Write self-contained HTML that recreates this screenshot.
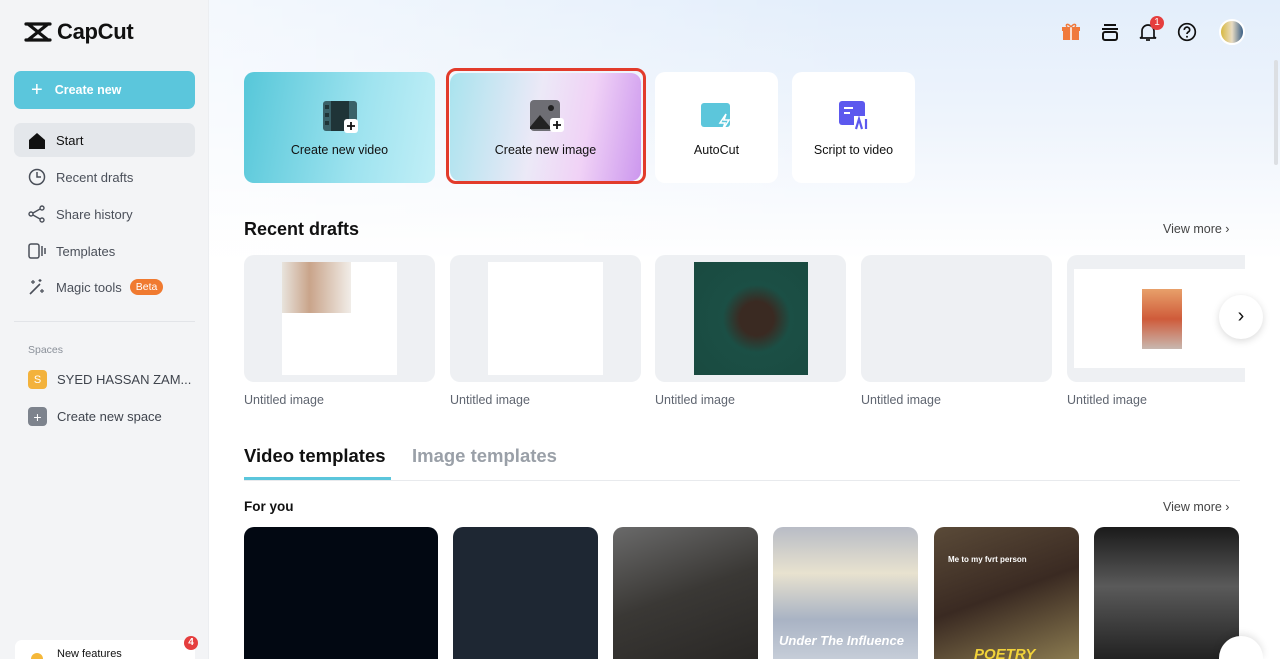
<!DOCTYPE html>
<html style="width:1280px;height:659px;overflow:hidden"><head><meta charset="utf-8"><style>
*{margin:0;padding:0;box-sizing:border-box}
body{width:1280px;height:659px;overflow:hidden;font-family:"Liberation Sans",sans-serif;position:relative;background:#fff}
.sb{position:absolute;left:0;top:0;width:209px;height:659px;background:#f3f4f6;border-right:1px solid #eceef1}
.main{position:absolute;left:209px;top:0;right:0;height:659px;background:linear-gradient(180deg,#e3eefb 0,#eef4fc 120px,#fff 260px)}
.main:before{content:"";position:absolute;inset:0;background:linear-gradient(90deg,rgba(255,255,255,.6),rgba(255,255,255,0) 60%)}
.a{position:absolute}
.nav{position:absolute;left:28px;font-size:13px;color:#4a4f59;display:flex;align-items:center;gap:10px}
.card{position:absolute;top:72px;height:111px;border-radius:10px;background:#fff;font-size:12.5px;color:#111;text-align:center}
.card .t{position:absolute;left:0;right:0;top:71px}
.dr{position:absolute;top:255px;height:127px;width:191px;border-radius:10px;background:#eef0f3}
.lbl{position:absolute;top:393px;font-size:12.5px;color:#5f6570}
.tp{position:absolute;top:527px;height:132px;border-radius:10px 10px 0 0}
</style></head><body>
<div class="sb">
 <div class="a" style="left:24px;top:19px;display:flex;align-items:center;gap:5px">
  <svg width="28" height="24" viewBox="0 0 28 24"><path d="M2 4h24M2 20h24M4 4l20 16M24 4L4 20" stroke="#111" stroke-width="3.2" fill="none" stroke-linecap="round"/></svg>
  <span style="font-size:22px;font-weight:bold;color:#111;letter-spacing:-.3px">CapCut</span>
 </div>
 <div class="a" style="left:14px;top:71px;width:181px;height:38px;border-radius:7px;background:#5bc6dc;color:#fff;font-size:12.5px;font-weight:bold;display:flex;align-items:center;padding-left:17px;gap:12px"><span style="font-size:20px;font-weight:normal">+</span>Create new</div>
 <div class="a" style="left:14px;top:123px;width:181px;height:34px;border-radius:7px;background:#e4e7eb"></div>
 <div class="nav" style="top:132px;color:#111"><svg width="18" height="17"><path d="M1 8L9 1l8 7v9H1z" fill="#111"/></svg>Start</div>
 <div class="nav" style="top:168px"><svg width="18" height="18"><circle cx="9" cy="9" r="7.5" stroke="#4a4f59" stroke-width="1.5" fill="none"/><path d="M9 4v5h4" stroke="#4a4f59" stroke-width="1.5" fill="none"/></svg>Recent drafts</div>
 <div class="nav" style="top:205px"><svg width="18" height="18"><circle cx="14" cy="3" r="2" fill="none" stroke="#4a4f59" stroke-width="1.4"/><circle cx="3" cy="9" r="2" fill="none" stroke="#4a4f59" stroke-width="1.4"/><circle cx="14" cy="15" r="2" fill="none" stroke="#4a4f59" stroke-width="1.4"/><path d="M5 8l7-4M5 10l7 4" stroke="#4a4f59" stroke-width="1.4"/></svg>Share history</div>
 <div class="nav" style="top:242px"><svg width="18" height="18"><rect x="1" y="2" width="10" height="14" rx="2" fill="none" stroke="#4a4f59" stroke-width="1.5"/><path d="M14 4v10M17 6v6" stroke="#4a4f59" stroke-width="1.5"/></svg>Templates</div>
 <div class="nav" style="top:278px"><svg width="18" height="18"><path d="M2 16L12 6" stroke="#4a4f59" stroke-width="1.6"/><path d="M5 2v4M3 4h4M14 11v4M12 13h4M12 1v3M10.5 2.5h3" stroke="#4a4f59" stroke-width="1.2"/></svg>Magic tools<span style="background:#f07a30;color:#fff;font-size:10.5px;border-radius:8px;padding:2px 6px;margin-left:-2px">Beta</span></div>
 <div class="a" style="left:14px;top:321px;width:181px;height:1px;background:#e2e4e8"></div>
 <div class="a" style="left:28px;top:344px;font-size:10.5px;color:#8a9099">Spaces</div>
 <div class="nav" style="top:370px;color:#3f444d"><span style="width:19px;height:19px;border-radius:4px;background:#f3b23c;color:#fff;font-size:11px;display:inline-flex;align-items:center;justify-content:center">S</span>SYED HASSAN ZAM...</div>
 <div class="nav" style="top:407px;color:#3f444d"><span style="width:19px;height:19px;border-radius:4px;background:#7d838d;color:#fff;font-size:14px;display:inline-flex;align-items:center;justify-content:center">+</span>Create new space</div>
 <div class="a" style="left:15px;top:640px;width:180px;height:19px;border-radius:7px 7px 0 0;background:#fff;font-size:11px;color:#111;padding:9px 0 0 42px;overflow:hidden;line-height:11px">New features</div>
 <div class="a" style="left:31px;top:653px;width:12px;height:6px;background:#f5b83a;border-radius:6px 6px 0 0"></div>
 <div class="a" style="left:184px;top:636px;width:14px;height:14px;border-radius:50%;background:#e53e3e;color:#fff;font-size:10px;font-weight:bold;text-align:center;line-height:14px">4</div>
</div>
<div class="main"></div>
<svg class="a" style="left:1061px;top:22px" width="20" height="20"><rect x="2" y="7" width="16" height="11" fill="#f07a3c"/><rect x="1" y="5" width="18" height="4" fill="#f07a3c"/><path d="M10 5v13" stroke="#fff" stroke-width="1.5"/><path d="M10 5C7 1 4 2 6 5M10 5c3-4 6-3 4 0" stroke="#f07a3c" stroke-width="1.5" fill="none"/></svg>
<svg class="a" style="left:1100px;top:22px" width="20" height="20"><path d="M4 3h12M2 7h16" stroke="#111" stroke-width="2"/><rect x="3" y="10" width="14" height="8" rx="2" fill="none" stroke="#111" stroke-width="2"/></svg>
<svg class="a" style="left:1138px;top:22px" width="20" height="20"><path d="M4 15V9a6 6 0 0112 0v6l2 1H2z" fill="none" stroke="#111" stroke-width="1.7"/><path d="M8 18h4" stroke="#111" stroke-width="1.7"/></svg>
<div class="a" style="left:1150px;top:16px;width:14px;height:14px;border-radius:50%;background:#e53e3e;color:#fff;font-size:10px;text-align:center;line-height:14px">1</div>
<svg class="a" style="left:1177px;top:22px" width="20" height="20"><circle cx="10" cy="10" r="8.3" fill="none" stroke="#111" stroke-width="1.7"/><path d="M7.3 8a2.7 2.7 0 115 1.2c-.8.8-2.3 1.2-2.3 2.8" fill="none" stroke="#111" stroke-width="1.7"/><circle cx="10" cy="14.8" r="1" fill="#111"/></svg>
<div class="a" style="left:1219px;top:19px;width:26px;height:26px;border-radius:50%;background:linear-gradient(90deg,#d8b940,#e9dcc3 50%,#3a5f86);border:2px solid #fff"></div>
<div class="a" style="left:1274px;top:60px;width:4px;height:105px;background:#dcdfe3;border-radius:2px"></div>
<div class="card" style="left:244px;width:191px;background:linear-gradient(100deg,#56c7d9,#9ee3ef 60%,#c2eff7)"><svg class="a" style="left:78px;top:28px" width="38" height="34"><rect x="1" y="1" width="34" height="30" rx="3" fill="#3a6168"/><rect x="9" y="1" width="18" height="30" fill="#1f3437"/><rect x="3" y="5" width="4" height="4" fill="#1f3437"/><rect x="3" y="13" width="4" height="4" fill="#1f3437"/><rect x="3" y="21" width="4" height="4" fill="#1f3437"/><rect x="22" y="19" width="14" height="14" rx="3" fill="#fff"/><path d="M29 22v8M25 26h8" stroke="#111" stroke-width="1.8"/></svg><div class="t">Create new video</div></div>
<div class="a" style="left:446px;top:68px;width:200px;height:116px;border:3px solid #e23b2b;border-radius:10px"></div>
<div class="card" style="left:450px;width:191px;top:73px;height:108px;background:linear-gradient(100deg,#a9e3ee,#ece9f7 45%,#f0d2f6 70%,#cc97ee)"><svg class="a" style="left:79px;top:26px" width="36" height="34"><rect x="1" y="1" width="30" height="31" rx="4" fill="#6e6e74"/><path d="M1 28l10-12 12 14H1z" fill="#222"/><circle cx="22" cy="9" r="3" fill="#222"/><rect x="21" y="19" width="14" height="14" rx="3" fill="#fff"/><path d="M28 22v8M24 26h8" stroke="#111" stroke-width="1.8"/></svg><div class="t" style="top:70px">Create new image</div></div>
<div class="card" style="left:655px;width:123px"><svg class="a" style="left:45px;top:30px" width="34" height="30"><rect x="1" y="1" width="29" height="24" rx="3" fill="#5cc6db"/><path d="M26 12l-6 9h5l-3 8 7-11h-5z" fill="#5cc6db" stroke="#fff" stroke-width="1.5"/></svg><div class="t">AutoCut</div></div>
<div class="card" style="left:792px;width:123px"><svg class="a" style="left:46px;top:28px" width="34" height="32"><rect x="1" y="1" width="26" height="24" rx="3" fill="#5c58ee"/><path d="M6 8h9M6 13h6" stroke="#fff" stroke-width="2"/><rect x="16" y="16" width="16" height="14" fill="#fff"/><path d="M18 29l3-10 3 10M28 19v10" stroke="#5c58ee" stroke-width="2.2" fill="none"/></svg><div class="t">Script to video</div></div>
<div class="a" style="left:244px;top:219px;font-size:18px;font-weight:bold;color:#111">Recent drafts</div>
<div class="a" style="left:1163px;top:222px;font-size:12.5px;color:#444">View more &#8250;</div>
<div class="dr" style="left:244px"><div class="a" style="left:38px;top:7px;width:115px;height:113px;background:#fff"></div><div class="a" style="left:38px;top:7px;width:69px;height:51px;background:linear-gradient(90deg,#e8e3dc,#c9a48a 40%,#f1ede8)"></div></div>
<div class="dr" style="left:450px"><div class="a" style="left:38px;top:7px;width:115px;height:113px;background:#fff"></div></div>
<div class="dr" style="left:655px"><div class="a" style="left:39px;top:7px;width:114px;height:113px;background:radial-gradient(circle at 55% 50%,#3a2a22 0,#3a2a22 20%,#1b4f45 40%,#1a4a40)"></div></div>
<div class="dr" style="left:861px"></div>
<div class="dr" style="left:1067px;width:178px;border-radius:10px 0 0 10px"><div class="a" style="left:7px;top:14px;width:171px;height:99px;background:#fff"></div><div class="a" style="left:75px;top:34px;width:40px;height:60px;background:linear-gradient(180deg,#e8a06a,#cf5b3a 50%,#c8b8b0)"></div></div>
<div class="a" style="left:1219px;top:295px;width:44px;height:44px;border-radius:50%;background:#fff;box-shadow:0 2px 8px rgba(0,0,0,.15);text-align:center;line-height:42px;font-size:20px;color:#111">&#8250;</div>
<div class="lbl" style="left:244px">Untitled image</div><div class="lbl" style="left:450px">Untitled image</div><div class="lbl" style="left:655px">Untitled image</div><div class="lbl" style="left:861px">Untitled image</div><div class="lbl" style="left:1067px">Untitled image</div>
<div class="a" style="left:244px;top:445px;font-size:18.5px;font-weight:bold;color:#111">Video templates</div>
<div class="a" style="left:412px;top:445px;font-size:18.5px;font-weight:bold;color:#9aa0a8">Image templates</div>
<div class="a" style="left:244px;top:480px;width:996px;height:1px;background:#e8eaed"></div>
<div class="a" style="left:244px;top:477px;width:147px;height:3px;background:#5bc6dc"></div>
<div class="a" style="left:244px;top:499px;font-size:13.5px;font-weight:bold;color:#111">For you</div>
<div class="a" style="left:1163px;top:500px;font-size:12.5px;color:#444">View more &#8250;</div>
<div class="tp" style="left:244px;width:194px;background:#020812"></div>
<div class="tp" style="left:453px;width:145px;background:#1e2733"></div>
<div class="tp" style="left:613px;width:145px;background:linear-gradient(160deg,#6a6a6a,#3a3835 50%,#2a2826)"></div>
<div class="tp" style="left:773px;width:145px;background:linear-gradient(180deg,#b8bcc6,#e8e2cf 35%,#a9b3c4 70%,#c6cdd8)"><div class="a" style="left:6px;top:106px;font-size:13px;font-weight:bold;font-style:italic;color:#fff">Under The Influence</div></div>
<div class="tp" style="left:934px;width:145px;background:linear-gradient(160deg,#5a4a38,#3a2a22 50%,#8a7a50)"><div class="a" style="left:14px;top:28px;font-size:8px;color:#fff;font-weight:bold">Me to my fvrt person</div><div class="a" style="left:40px;top:119px;font-size:15px;color:#f2d33a;font-weight:bold;font-style:italic">POETRY</div></div>
<div class="tp" style="left:1094px;width:145px;background:linear-gradient(180deg,#1a1a1a,#5a5a5a 45%,#222)"></div>
<div class="a" style="left:1219px;top:636px;width:44px;height:23px;border-radius:22px 22px 0 0;background:#fff;box-shadow:0 -2px 8px rgba(0,0,0,.12)"></div>
</body></html>
